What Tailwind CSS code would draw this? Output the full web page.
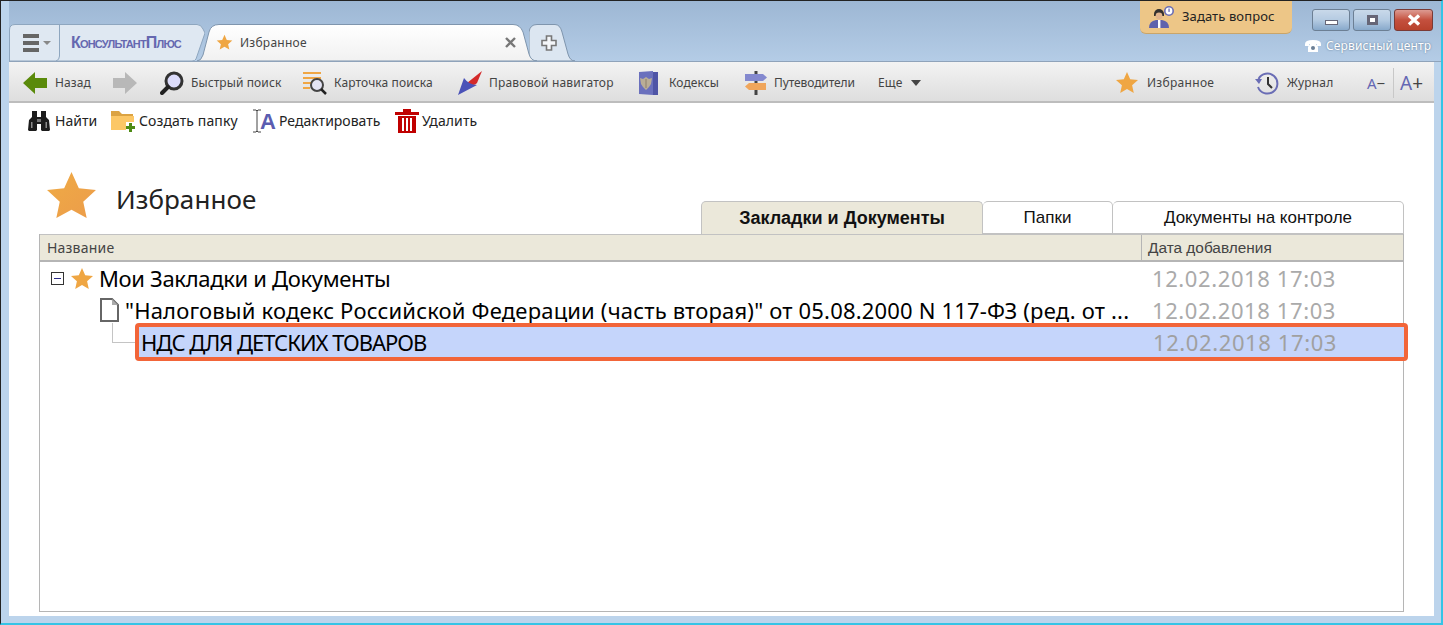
<!DOCTYPE html>
<html lang="ru">
<head>
    <meta charset="UTF-8">
    <title>Избранное</title>
    <script src="https://cdn.jsdelivr.net/npm/@tailwindcss/browser@4"></script>
</head>
<body class="bg-white">
<div class="w-[1443px] h-[625px] overflow-hidden flex flex-col bg-[#bcd4ec] border-t border-l border-[#222] border-r-2 border-b-2 border-r-[#35c4e6] border-b-[#35c4e6] font-['Noto_Sans',sans-serif] text-[#333]">

    <!-- Header: tabs + caption buttons -->
    <div class="h-[61px] shrink-0 flex bg-gradient-to-b from-[#9db7d4] to-[#b4cce6] ml-[8px] border-b border-[#8fa3ba]">
        <div class="flex items-end h-full">
            <!-- Menu + logo tab -->
            <div class="relative w-[196px] h-[37px] flex items-center">
                <svg class="absolute inset-0" width="196" height="37"><path d="M.5 37V6Q.5 .5 6 .5H188Q192 .5 194 5L196 9L187 35Q186 37 183 37Z" fill="#dfe8f2" stroke="#8ea6bf"/><path d="M50.500 1V32Q50.500 36 47 37" fill="none" stroke="#8ea6bf"/></svg>
                <div class="relative ml-[14px] w-[16px] flex flex-col gap-[3px]">
                    <span class="h-[4px] bg-[#666]"></span><span class="h-[4px] bg-[#666]"></span><span class="h-[4px] bg-[#666]"></span>
                </div>
                <span class="relative ml-[4px] w-0 h-0 border-x-[4px] border-x-transparent border-t-[4px] border-t-[#888]"></span>
                <span class="relative ml-[20px] font-['Liberation_Sans',sans-serif] font-bold text-[16px] tracking-[-.8px] text-[#6568b0] [font-variant:small-caps] whitespace-nowrap">КонсультантПлюс</span>
            </div>
            <!-- Active tab -->
            <div class="relative z-10 -ml-[8px] w-[340px] h-[37px] flex items-center">
                <svg class="absolute inset-0" width="340" height="37"><defs><linearGradient id="tabg" x1="0" y1="0" x2="0" y2="1"><stop offset="0" stop-color="#fff"/><stop offset="1" stop-color="#f1f1f1"/></linearGradient></defs><path d="M0 37Q4 37 6 31L12 8Q14 .5 22 .5H316Q323 .5 326 8L332 30Q334 37 340 37Z" fill="url(#tabg)" stroke="#7f95ad"/></svg>
                <svg class="relative ml-[19px]" width="17" height="17" viewBox="0 0 24 24"><path d="M12 1l3.200 7.300 7.800.8-5.900 5.200 1.700 7.700L12 18l-6.800 4 1.700-7.700L1 9.100l7.800-.8z" fill="#efa643"/></svg>
                <span class="relative ml-[7px] text-[12px] tracking-[.25px] text-[#444]">Избранное</span>
                <svg class="relative ml-[197px]" width="13" height="13" viewBox="0 0 13 13"><path d="M2 2l9 9M11 2l-9 9" stroke="#777" stroke-width="2.400"/></svg>
            </div>
            <!-- New tab -->
            <div class="relative -ml-[8px] w-[46px] h-[37px] flex items-center">
                <svg class="absolute inset-0" width="46" height="37"><path d="M0 37V8Q1 .5 8 .5H26Q31 .5 33 8L39 30Q41 37 46 37Z" fill="#dce6f1" stroke="#7f95ad"/></svg>
                <svg class="relative ml-[12px]" width="16" height="16" viewBox="0 0 16 16"><path d="M5.500 1h5v4.500H15v5h-4.500V15h-5v-4.500H1v-5h4.500z" fill="#f4f6f9" stroke="#777" stroke-width="1.600"/></svg>
            </div>
        </div>
        <div class="flex-1"></div>
        <!-- Ask button -->
        <div class="w-[152px] h-[34px] -mt-[1px] mr-[20px] bg-[#edc687] rounded-b-[6px] border-b border-[#c9a56a] flex items-center pl-[9px] gap-[7px]">
            <svg width="26" height="22" viewBox="0 0 26 22"><circle cx="20" cy="5" r="5" fill="#6a6db5"/><circle cx="20" cy="5" r="3.400" fill="#fff"/><rect x="19.400" y="2.500" width="1.300" height="3.400" fill="#6a6db5"/><path d="M5 8a5 5 0 0 1 10 0v2H5z" fill="#33302e"/><circle cx="10" cy="10" r="3.400" fill="#e2b48c"/><path d="M0 22q0-7 7-8h6q7 1 7 8z" fill="#5f63ad"/><path d="M9 14h2.400v8H9z" fill="#fff"/></svg>
            <span class="text-[13px] tracking-[.1px] text-[#222] whitespace-nowrap">Задать вопрос</span>
        </div>
        <!-- Caption buttons + service center -->
        <div class="w-[129px] flex flex-col items-start pt-[8px]">
            <div class="flex gap-[3px]">
                <div class="w-[38px] h-[22px] rounded-[3px] border border-[#6c7f94] bg-gradient-to-b from-[#c9d9ea] via-[#b5cbe2] to-[#88a9cb] flex items-center justify-center"><span class="mt-[4px] w-[13px] h-[5px] bg-white border border-[#667]"></span></div>
                <div class="w-[38px] h-[22px] rounded-[3px] border border-[#6c7f94] bg-gradient-to-b from-[#c9d9ea] via-[#b5cbe2] to-[#88a9cb] flex items-center justify-center"><span class="w-[11px] h-[10px] bg-white border-[3px] border-[#667]"></span></div>
                <div class="w-[39px] h-[22px] rounded-[3px] border border-[#7a3a35] bg-gradient-to-b from-[#dc9a92] via-[#c4503e] to-[#b8422d] flex items-center justify-center">
                    <svg width="14" height="12" viewBox="0 0 14 12"><path d="M2 1.500l10 9M12 1.500l-10 9" stroke="#fff" stroke-width="3.400"/></svg>
                </div>
            </div>
            <div class="flex items-center gap-[5px] mt-[6px] ml-[-7px] text-[12px] text-white [text-shadow:0_0_2px_#55708c] whitespace-nowrap">
                <svg width="16" height="14" viewBox="0 0 16 14"><path d="M0 5Q0 1 8 1t8 4v2h-4V5H4v2H0z M3 8l2-3h6l2 3v5H3z" fill="#fff"/><circle cx="8" cy="9" r="2" fill="#6b7f95"/></svg>
                <span class="tracking-[.15px]">Сервисный центр</span>
            </div>
        </div>
    </div>

    <!-- Main window body -->
    <div class="ml-[8px] w-[1425px] h-[554px] shrink-0 bg-white flex flex-col">

        <!-- Navigation toolbar -->
        <div class="h-[41px] shrink-0 flex items-center bg-gradient-to-b from-[#f3f3f3] to-[#dedede] border-b-2 border-[#bdbdbd] text-[12px] tracking-[.1px] text-[#444] pt-[3px] whitespace-nowrap">
            <svg class="ml-[14px]" width="24" height="24" viewBox="0 0 24 24"><path d="M0 12L12 1v6h12v10H12v6z" fill="#5a8a0a"/></svg>
            <span class="ml-[8px] w-[36px]">Назад</span>
            <svg class="ml-[22px]" width="24" height="24" viewBox="0 0 24 24"><path d="M24 12L12 1v6H0v10h12v6z" fill="#b8b8b8"/></svg>
            <svg class="ml-[23px]" width="24" height="24" viewBox="0 0 24 24"><circle cx="14" cy="10" r="8" fill="#dcdcfb" stroke="#333" stroke-width="3"/><path d="M8 16L2 22" stroke="#222" stroke-width="4" stroke-linecap="round"/></svg>
            <span class="ml-[7px] w-[91px]">Быстрый поиск</span>
            <svg class="ml-[21px]" width="24" height="24" viewBox="0 0 24 24"><path d="M0 1h18v2H0zM0 6h18v2H0zM0 11h8v2H0zM0 16h7v2H0z" fill="#f0a644"/><circle cx="14" cy="14" r="6" fill="#e4e4f4" stroke="#444" stroke-width="2"/><path d="M18 18l5 5" stroke="#222" stroke-width="2.500"/></svg>
            <span class="ml-[7px] w-[102px]">Карточка поиска</span>
            <svg class="ml-[22px]" width="24" height="24" viewBox="0 0 24 24"><path d="M24 0L19 12Q16 16 9 12z" fill="#d42a2a"/><path d="M0 24L6 7q5 7 13 7z" fill="#4a52b8"/></svg>
            <span class="ml-[7px] w-[127px] tracking-[.2px]">Правовой навигатор</span>
            <svg class="ml-[23px]" width="20" height="24" viewBox="0 0 20 24"><path d="M0 1l14-1v24L0 23z" fill="#6a70bd"/><path d="M14 1h5v23h-5z" fill="#4f55a6"/><path d="M1 7l3 1 3-2 3 2 3-1-1 6-2 3-3 3-3-3-2-3z" fill="#b9ad96"/><path d="M7 8v9" stroke="#8d7f6a"/></svg>
            <span class="ml-[10px] w-[52px]">Кодексы</span>
            <svg class="ml-[24px]" width="22" height="24" viewBox="0 0 22 24"><rect x="9.500" y="0" width="3" height="24" fill="#444"/><path d="M0 3h18l4 3.500-4 3.500H0z" fill="#8489cf"/><path d="M21 12H4L0 15.500 4 19h17z" fill="#f0a65c"/></svg>
            <span class="ml-[7px] w-[82px] tracking-[-.1px]">Путеводители</span>
            <span class="ml-[22px] w-[25px]">Еще</span>
            <span class="ml-[8px] w-0 h-0 border-x-[5px] border-x-transparent border-t-[6px] border-t-[#444]"></span>
            <div class="flex-1"></div>
            <svg width="24" height="24" viewBox="0 0 24 24"><path d="M12 1l3.200 7.300 7.800.8-5.900 5.200 1.700 7.700L12 18l-6.800 4 1.700-7.700L1 9.100l7.800-.8z" fill="#efa643"/></svg>
            <span class="ml-[8px] w-[68px] tracking-[.3px]">Избранное</span>
            <svg class="ml-[40px]" width="24" height="24" viewBox="0 0 24 24"><path d="M3.500 8A10 10 0 1 1 3 16" fill="none" stroke="#6a6db5" stroke-width="2"/><path d="M0 8h7l-3 5z" fill="#6a6db5"/><path d="M13 6v7l4 4" fill="none" stroke="#333" stroke-width="2"/></svg>
            <span class="ml-[8px] w-[46px] tracking-[.2px]">Журнал</span>
            <span class="ml-[34px] w-[17px] text-[15px] tracking-normal"><span class="text-[#6467b3]">A</span>−</span>
            <span class="ml-[9px] h-[30px] border-l border-[#c8c8c8]"></span>
            <span class="ml-[6px] w-[24px] text-[19px] tracking-normal"><span class="text-[#6467b3]">A</span>+</span>
            <div class="w-[10px]"></div>
        </div>

        <!-- Actions toolbar -->
        <div class="h-[34px] shrink-0 flex items-center text-[14px] text-[#222] pt-[1px] whitespace-nowrap">
            <svg class="ml-[19px]" width="22" height="22" viewBox="0 0 22 22"><path d="M4 1h5v6h4V1h5v6l3 3 1 10-1 1h-7l-1-1V14H9v6l-1 1H1l-1-1 1-10 3-3z" fill="#1c1c1c"/><path d="M9 9h4v3H9z" fill="#777"/><path d="M3 12h1.500v6H3zM17.500 12H19v6h-1.500z" fill="#8a8a8a"/></svg>
            <span class="ml-[5px] w-[43px] tracking-[.05px]">Найти</span>
            <svg class="ml-[13px]" width="24" height="22" viewBox="0 0 24 22"><path d="M0 1h8l3 3h11v3H0z" fill="#dca342"/><path d="M0 6h23v14H0z" fill="#fcc766"/><path d="M15 12h9v10h-9z" fill="#fff"/><path d="M18 13h3v3h3v3h-3v3h-3v-3h-3v-3h3z" fill="#4d8a14"/></svg>
            <span class="ml-[4px] w-[100px] tracking-[.1px]">Создать папку</span>
            <svg class="ml-[13px]" width="24" height="24" viewBox="0 0 24 24"><path d="M1 1h3l1 1 1-1h3M1 23h3l1-1 1 1h3M5 2v20" fill="none" stroke="#444"/><text x="8" y="20" font-family="Liberation Sans" font-weight="700" font-size="22" fill="#5a5db0">A</text></svg>
            <span class="ml-[3px] w-[103px]">Редактировать</span>
            <svg class="ml-[13px]" width="24" height="24" viewBox="0 0 24 24"><path d="M0 3h24v3H0zM8 0h8v3H8z" fill="#c00000"/><path d="M3 7h18v17H3z" fill="#c00000"/><path d="M7 9h2v13H7zM11 9h2v13h-2zM15 9h2v13h-2z" fill="#fff"/></svg>
            <span class="ml-[3px] w-[56px] tracking-[.1px]">Удалить</span>
        </div>

        <!-- Page heading + view tabs -->
        <div class="h-[97px] shrink-0 flex pl-[38px] pr-[30px]">
            <svg class="mt-[35px] shrink-0" width="49" height="46" viewBox="0 0 50 47"><defs><linearGradient id="starg" x1="0" y1="0" x2="1" y2="1"><stop offset="0" stop-color="#efab45"/><stop offset="1" stop-color="#ec9c4a"/></linearGradient></defs><path d="M25 0l7.500 16.500 17.500 2-13 12 3.500 16.500L25 38.500 9.500 47 13 30.500 0 18.500l17.500-2z" fill="url(#starg)"/></svg>
            <h1 class="ml-[20px] mt-[44px] text-[26px] leading-[36px] tracking-[.05px] text-[#222]">Избранное</h1>
            <div class="flex-1"></div>
            <div class="self-end flex h-[33px] text-[#111] font-['Liberation_Sans',sans-serif] text-[17px]">
                <div class="w-[282px] bg-[#ebe8da] border border-b-0 border-[#c2c2c2] rounded-t-[5px] flex items-center justify-center font-bold text-[18px]">Закладки и Документы</div>
                <div class="w-[130px] bg-white border-t border-r border-[#c2c2c2] border-b rounded-t-[5px] flex items-center justify-center">Папки</div>
                <div class="w-[291px] bg-white border-t border-r border-b border-[#c2c2c2] rounded-t-[5px] flex items-center justify-center">Документы на контроле</div>
            </div>
        </div>

        <!-- Tree table -->
        <div class="ml-[30px] w-[1365px] h-[378px] border-x border-b border-[#b5b5b5] flex flex-col">
            <div class="h-[28px] shrink-0 flex bg-[#ebe8da] border-b-2 border-t border-t-[#c2c2c2] border-b-[#b5b5b5] text-[14px] text-[#444]">
                <div class="w-[1101px] pl-[7px] leading-[26px] tracking-[.2px]">Название</div>
                <div class="flex-1 pl-[6px] border-l border-[#b5b5b5] leading-[26px] font-['Liberation_Sans',sans-serif] text-[15.400px]">Дата добавления</div>
            </div>
            <div class="flex flex-col text-[22px] text-black whitespace-nowrap">
                <!-- Root row -->
                <div class="h-[31px] mt-[1px] flex items-center">
                    <span class="ml-[11px] w-[13px] h-[13px] shrink-0 border border-[#333] flex items-center justify-center"><span class="w-[7px] h-px bg-[#2a2a8a]"></span></span>
                    <svg class="ml-[6px] shrink-0" width="24" height="24" viewBox="0 0 24 24"><path d="M12 1l3.200 7.300 7.800.8-5.900 5.200 1.700 7.700L12 18l-6.800 4 1.700-7.700L1 9.100l7.800-.8z" fill="#efa643"/></svg>
                    <span class="ml-[5px] flex-1 min-w-0 tracking-[-.33px]">Мои Закладки и Документы</span>
                    <span class="w-[251px] shrink-0 text-[#aaa] tracking-[.6px]">12.02.2018 17:03</span>
                </div>
                <!-- Document row -->
                <div class="h-[32px] flex items-center">
                    <svg class="ml-[60px] shrink-0" width="19" height="24" viewBox="0 0 19 24"><path d="M1 1h11l6 6v16H1z" fill="#fff" stroke="#666" stroke-width="2"/><path d="M12 1v6h6z" fill="#aaa"/></svg>
                    <span class="ml-[6px] flex-1 min-w-0 overflow-hidden tracking-[.18px]">"Налоговый кодекс Российской Федерации (часть вторая)" от 05.08.2000 N 117-ФЗ (ред. от ...</span>
                    <span class="w-[251px] shrink-0 text-[#aaa] tracking-[.6px]">12.02.2018 17:03</span>
                </div>
                <!-- Selected bookmark row -->
                <div class="flex h-[38px] -mt-[3px]">
                    <div class="ml-[72px] w-[23px] h-[20px] shrink-0 border-l border-b border-[#c4c4c4]"></div>
                    <div class="w-[1273px] h-[38px] shrink-0 bg-[#c5d5fb] border-[4px] border-[#f26539] rounded-[4px] flex items-center">
                        <span class="ml-[2px] flex-1 min-w-0 tracking-[-1px]">НДС ДЛЯ ДЕТСКИХ ТОВАРОВ</span>
                        <span class="w-[251px] shrink-0 text-[#a0a0a0] tracking-[.6px]">12.02.2018 17:03</span>
                    </div>
                </div>
            </div>
        </div>
    </div>
</div>
</body>
</html>
